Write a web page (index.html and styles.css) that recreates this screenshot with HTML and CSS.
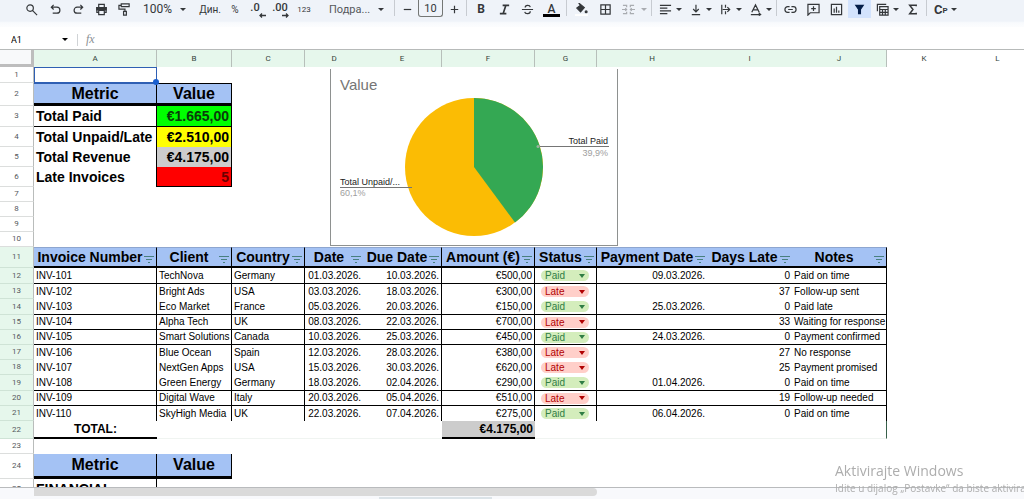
FILE: index.html
```html
<!DOCTYPE html>
<html lang="sr">
<head>
<meta charset="utf-8">
<title>Invoices</title>
<link rel="stylesheet" href="styles.css">
</head>
<body>
<svg class="defs" aria-hidden="true">
  <symbol id="filter" viewBox="0 0 10 8"><path d="M0 1.500h10M2 4.500h6M4 7.500h2" stroke="currentColor" fill="none"/></symbol>
</svg>
<header class="toolbar">
  <button class="tool wide" aria-label="Search"><svg viewBox="0 0 14 14"><circle cx="5.500" cy="5.500" r="3.500"/><path d="M8 8l5 5"/></svg></button>
  <button class="tool" aria-label="Undo"><svg viewBox="0 0 14 14"><path d="M5 2L2.500 4.500 5 7M3 4.500h5.500a3.200 3.200 0 0 1 0 6.500H4"/></svg></button>
  <button class="tool" aria-label="Redo"><svg viewBox="0 0 14 14"><path d="M9 2l2.500 2.500L9 7M11 4.500H5.500a3.200 3.200 0 0 0 0 6.500H10"/></svg></button>
  <button class="tool" aria-label="Print"><svg viewBox="0 0 14 14"><path d="M4 4.500v-3h6v3M4 10H2V5h10v5h-2M4 8h6v4.500H4z"/><path d="M2 5h10v2.500H2z" fill="currentColor"/></svg></button>
  <button class="tool" aria-label="Paint format"><svg viewBox="0 0 14 14"><path d="M3.500 1H12v3H3.500zM3.500 2.500H1V6.500h6.500v2.500M6 9h3v4H6z"/></svg></button>
  <button class="tool zoom">100%<i class="caret"></i></button>
  <button class="tool currency">Дин.</button>
  <button class="tool percent">%</button>
  <button class="tool decimal dec">.0<svg viewBox="0 0 8 5"><path d="M8 2.500H2M4 .5l-2 2 2 2"/></svg></button>
  <button class="tool decimal">.00<svg viewBox="0 0 8 5"><path d="M0 2.500h6M4 .5l2 2-2 2"/></svg></button>
  <button class="tool formats">123</button>
  <button class="tool family">Подра...<i class="caret"></i></button>
  <span class="sep"></span>
  <button class="tool step" aria-label="Decrease font size"><svg viewBox="0 0 14 14"><path d="M3 7h8"/></svg></button>
  <input class="size" value="10" aria-label="Font size">
  <button class="tool step" aria-label="Increase font size"><svg viewBox="0 0 14 14"><path d="M3 7h8M7 3v8"/></svg></button>
  <span class="sep"></span>
  <button class="tool letter">B</button>
  <button class="tool" aria-label="Italic"><svg viewBox="0 0 14 14"><path d="M5 2.500h7M2 11.500h7M8.500 2.500l-3 9" stroke-width="1.800"/></svg></button>
  <button class="tool" aria-label="Strikethrough"><svg viewBox="0 0 14 14"><path d="M1 7h12M10 4.500C9.500 1.800 4.500 1.800 4.500 4.800M4 9.500c.5 2.800 6 2.800 6-.5"/></svg></button>
  <button class="tool letter color"><span>A</span></button>
  <span class="sep"></span>
  <button class="tool fill" aria-label="Fill colour"><svg viewBox="0 0 14 14"><path d="M4 0l6 5-4 4.500L2 5.500l4-3z" fill="currentColor"/><circle cx="12" cy="9.500" r="1" fill="currentColor"/><path d="M0 13h14" stroke="#fff" stroke-width="2"/></svg></button>
  <button class="tool" aria-label="Borders"><svg viewBox="0 0 14 14"><path d="M2 2h10v10H2zM7 2v10M2 7h10"/></svg></button>
  <button class="tool combo pale" aria-label="Merge cells"><svg viewBox="0 0 14 14"><path d="M1 2.500h4v2M13 2.500H9v2M1 11.500h4v-2M13 11.500H9v-2M0 7h5M3.500 5.500L5 7 3.500 8.500M14 7H9M10.500 5.500L9 7l1.500 1.500"/></svg><i class="caret"></i></button>
  <span class="sep"></span>
  <button class="tool combo" aria-label="Horizontal align"><svg viewBox="0 0 14 14"><path d="M1 2.500h12M1 5.500h8M1 8.500h12M1 11.500h8"/></svg><i class="caret"></i></button>
  <button class="tool combo" aria-label="Vertical align"><svg viewBox="0 0 14 14"><path d="M3 12.500h9M7.500 2v7M4.500 6.500l3 3 3-3"/></svg><i class="caret"></i></button>
  <button class="tool combo" aria-label="Wrap"><svg viewBox="0 0 14 14"><path d="M3 2v10M7 2v3M7 9v3M4 7h7M9 4.500L11.500 7 9 9.500"/></svg><i class="caret"></i></button>
  <button class="tool combo" aria-label="Rotate"><svg viewBox="0 0 14 14"><path d="M3 10l4-8 4 8M4.500 7.500h5M2 12.500h10M10.500 10.500l2 2-2 1"/></svg><i class="caret"></i></button>
  <span class="sep"></span>
  <button class="tool" aria-label="Link"><svg viewBox="0 0 14 14"><path d="M6 4H4a3 3 0 0 0 0 6h2M8 4h2a3 3 0 0 1 0 6H8M4.500 7h5"/></svg></button>
  <button class="tool" aria-label="Comment"><svg viewBox="0 0 14 14"><path d="M1 13V1.500h12v9H3.500zM7 3.500v5M4.500 6h5"/></svg></button>
  <button class="tool" aria-label="Chart"><svg viewBox="0 0 14 14"><path d="M1.500 1.500h11v11h-11zM4.500 6v4.500M7 4v6.500M9.500 8v2.500"/></svg></button>
  <button class="tool on" aria-label="Filter"><svg viewBox="0 0 14 14"><path d="M3 2.500h8L8 7v4.500H6V7z" fill="currentColor"/></svg></button>
  <button class="tool combo" aria-label="Table views"><svg viewBox="0 0 14 14"><path d="M1.500 9V1.500H11M4 4h9v9H4zM4 7h9M4 10h9M7 7v6M10 7v6"/></svg><i class="caret"></i></button>
  <button class="tool" aria-label="Functions"><svg viewBox="0 0 14 14"><path d="M11 3.500V2.500H4L7.500 7 4 11.500h7v-1" stroke-width="1.600"/></svg></button>
  <span class="sep"></span>
  <button class="tool combo script">С<small>Р</small><i class="caret"></i></button>
</header>
<div class="formula">
  <label class="namebox"><input value="A1" aria-label="Name box"><i class="caret"></i></label>
  <span class="fx">fx</span>
  <input class="entry" aria-label="Formula">
</div>
<main class="sheet">
<table class="grid">
<colgroup><col class="c-n"><col class="c-a"><col class="c-b"><col class="c-c"><col class="c-d"><col class="c-e"><col class="c-f"><col class="c-g"><col class="c-h"><col class="c-i"><col class="c-j"><col class="c-k"><col class="c-l"></colgroup>
<thead>
<tr class="letters"><th class="corner"></th><th>A</th><th>B</th><th>C</th><th class="open">D</th><th>E</th><th>F</th><th>G</th><th class="open">H</th><th class="open">I</th><th>J</th><th class="plain">K</th><th class="plain">L</th></tr>
</thead>
<tbody>
<tr class="r16"><th>1</th><td class="selected"></td></tr>
<tr class="r23 title first"><th>2</th><td>Metric</td><td>Value</td></tr>
<tr class="r21 metric ruled"><th>3</th><td>Total Paid</td><td class="paid">€1.665,00</td></tr>
<tr class="r20 metric"><th>4</th><td>Total Unpaid/Late</td><td class="unpaid">€2.510,00</td></tr>
<tr class="r20 metric"><th>5</th><td>Total Revenue</td><td class="sum">€4.175,00</td></tr>
<tr class="r20 metric"><th>6</th><td>Late Invoices</td><td class="overdue">5</td></tr>
<tr class="r15"><th>7</th></tr>
<tr class="r15"><th>8</th></tr>
<tr class="r15"><th>9</th></tr>
<tr class="r15"><th>10</th></tr>
<tr class="r21 heads ranged"><th>11</th>
<td><div>Invoice Number<button aria-label="Filter Invoice Number"><svg><use href="#filter"/></svg></button></div></td>
<td><div>Client<button aria-label="Filter Client"><svg><use href="#filter"/></svg></button></div></td>
<td><div>Country<button aria-label="Filter Country"><svg><use href="#filter"/></svg></button></div></td>
<td class="open"><div>Date<button aria-label="Filter Date"><svg><use href="#filter"/></svg></button></div></td>
<td><div>Due Date<button aria-label="Filter Due Date"><svg><use href="#filter"/></svg></button></div></td>
<td><div>Amount (€)<button aria-label="Filter Amount"><svg><use href="#filter"/></svg></button></div></td>
<td><div>Status<button aria-label="Filter Status"><svg><use href="#filter"/></svg></button></div></td>
<td class="open"><div>Payment Date<button aria-label="Filter Payment Date"><svg><use href="#filter"/></svg></button></div></td>
<td class="open"><div>Days Late<button aria-label="Filter Days Late"><svg><use href="#filter"/></svg></button></div></td>
<td><div>Notes<button aria-label="Filter Notes"><svg><use href="#filter"/></svg></button></div></td></tr>
<tr class="r16 data ranged ruled"><th>12</th><td>INV-101</td><td>TechNova</td><td>Germany</td><td>01.03.2026.</td><td>10.03.2026.</td><td>€500,00</td><td><span class="chip"><select aria-label="Status 101"><option>Paid</option></select></span></td><td>09.03.2026.</td><td>0</td><td>Paid on time</td></tr>
<tr class="r15 data ranged"><th>13</th><td>INV-102</td><td>Bright Ads</td><td>USA</td><td>03.03.2026.</td><td>18.03.2026.</td><td>€300,00</td><td><span class="chip late"><select aria-label="Status 102"><option>Late</option></select></span></td><td></td><td>37</td><td>Follow-up sent</td></tr>
<tr class="r16 data ranged ruled"><th>14</th><td>INV-103</td><td>Eco Market</td><td>France</td><td>05.03.2026.</td><td>20.03.2026.</td><td>€150,00</td><td><span class="chip"><select aria-label="Status 103"><option>Paid</option></select></span></td><td>25.03.2026.</td><td>0</td><td>Paid late</td></tr>
<tr class="r15 data ranged ruled"><th>15</th><td>INV-104</td><td>Alpha Tech</td><td>UK</td><td>08.03.2026.</td><td>22.03.2026.</td><td>€700,00</td><td><span class="chip late"><select aria-label="Status 104"><option>Late</option></select></span></td><td></td><td>33</td><td>Waiting for response</td></tr>
<tr class="r15 data ranged ruled"><th>16</th><td>INV-105</td><td>Smart Solutions</td><td>Canada</td><td>10.03.2026.</td><td>25.03.2026.</td><td>€450,00</td><td><span class="chip"><select aria-label="Status 105"><option>Paid</option></select></span></td><td>24.03.2026.</td><td>0</td><td>Payment confirmed</td></tr>
<tr class="r15 data ranged"><th>17</th><td>INV-106</td><td>Blue Ocean</td><td>Spain</td><td>12.03.2026.</td><td>28.03.2026.</td><td>€380,00</td><td><span class="chip late"><select aria-label="Status 106"><option>Late</option></select></span></td><td></td><td>27</td><td>No response</td></tr>
<tr class="r15 data ranged"><th>18</th><td>INV-107</td><td>NextGen Apps</td><td>USA</td><td>15.03.2026.</td><td>30.03.2026.</td><td>€620,00</td><td><span class="chip late"><select aria-label="Status 107"><option>Late</option></select></span></td><td></td><td>25</td><td>Payment promised</td></tr>
<tr class="r16 data ranged ruled"><th>19</th><td>INV-108</td><td>Green Energy</td><td>Germany</td><td>18.03.2026.</td><td>02.04.2026.</td><td>€290,00</td><td><span class="chip"><select aria-label="Status 108"><option>Paid</option></select></span></td><td>01.04.2026.</td><td>0</td><td>Paid on time</td></tr>
<tr class="r15 data ranged ruled"><th>20</th><td>INV-109</td><td>Digital Wave</td><td>Italy</td><td>20.03.2026.</td><td>05.04.2026.</td><td>€510,00</td><td><span class="chip late"><select aria-label="Status 109"><option>Late</option></select></span></td><td></td><td>19</td><td>Follow-up needed</td></tr>
<tr class="r15 data ranged"><th>21</th><td>INV-110</td><td>SkyHigh Media</td><td>UK</td><td>22.03.2026.</td><td>07.04.2026.</td><td>€275,00</td><td><span class="chip"><select aria-label="Status 110"><option>Paid</option></select></span></td><td>06.04.2026.</td><td>0</td><td>Paid on time</td></tr>
<tr class="r18 total ranged"><th>22</th><td class="label">TOTAL:</td><td colspan="4"></td><td class="amount">€4.175,00</td><td colspan="4" class="edge"></td></tr>
<tr class="r15"><th>23</th></tr>
<tr class="r25 title"><th>24</th><td>Metric</td><td>Value</td></tr>
<tr class="r20 metric"><th>25</th><td>FINANCIAL</td></tr>
</tbody>
</table>
<figure class="chart">
<svg viewBox="0 0 286 176">
  <text x="9" y="21" class="chart-title">Value</text>
  <circle cx="143" cy="98" r="69" fill="#fbbc04"/>
  <path d="M143 98V29A69 69 0 0 1 184 153.500z" fill="#34a853"/>
  <path d="M207 77.500h71M9 118.500h72" stroke="#757575" fill="none"/>
  <circle cx="207" cy="77.500" r="1.500" fill="#9ab39f"/>
  <text x="277" y="75" class="end">Total Paid</text>
  <text x="277" y="87" class="end share">39,9%</text>
  <text x="9" y="116">Total Unpaid/...</text>
  <text x="9" y="127" class="share">60,1%</text>
</svg>
</figure>
</main>
<footer class="bottom"><div class="thumb"></div><div class="tab"></div></footer>
<aside class="activate"><strong>Aktivirajte Windows</strong><span>Idite u dijalog „Postavke“ da biste aktivirali Windows.</span></aside>
</body>
</html>
```

FILE: styles.css
```css
* { box-sizing: border-box; }
body { margin: 0; height: 100vh; display: flex; flex-direction: column; overflow: hidden; background: #fff; color: #000; font-family: "Liberation Sans", Arial, sans-serif; font-size: 10px; }
button, input, select { font: inherit; color: inherit; margin: 0; padding: 0; border: 0; background: none; }
.defs { position: absolute; width: 0; height: 0; }

.toolbar { flex: none; height: 27px; display: flex; align-items: flex-start; padding-left: 19px; background: linear-gradient(#eff3f9 78%, #f8fafd 84%, #fcfdfe); color: #34373a; font-family: Roboto, sans-serif; overflow: hidden; }
.tool { flex: none; width: 23px; height: 18px; display: flex; align-items: center; justify-content: center; font-size: 11px; }
.tool svg { flex: none; width: 13px; height: 13px; fill: none; stroke: currentColor; stroke-width: 1.300; }
.wide { width: 25px; }
.caret { flex: none; width: 0; height: 0; border: 3px solid transparent; border-top-color: currentColor; border-bottom: 0; }
.zoom { width: 54px; padding: 0 4px 0 7px; justify-content: space-between; font-size: 12px; }
.currency { width: 38px; font-size: 10px; }
.currency { padding-left: 2px; }
.percent { width: 14px; font-size: 10px; }
.decimal { width: 24px; flex-direction: column; font-weight: 500; font-size: 11px; line-height: 10px; align-items: center; padding-top: 2px; }
.tool.decimal svg { width: 8px; height: 5px; align-self: flex-end; margin-right: 2px; }
.dec { width: 26px; }
.formats { width: 24px; font-size: 8px; }
.family { width: 76px; padding: 0 8px 0 13px; justify-content: space-between; color: #55585c; }
.family .caret { color: #34373a; }
.sep { flex: none; width: 1px; height: 16px; margin: 0 2px; background: #c7cbd1; }
.step { width: 20px; }
.size { flex: none; width: 25px; height: 17px; margin: 0 1px; text-align: center; font-size: 11px; border: 1px solid #747775; border-top: 0; border-radius: 0 0 3px 3px; }
.letter { width: 24px; font-weight: 700; font-size: 12px; }
.color { width: 25px; font-weight: 500; }
.color span { width: 17px; height: 16px; line-height: 16px; border-bottom: 3px solid #000; margin-bottom: 1px; }
.fill { width: 25px; }
.combo { width: 30px; padding: 0 2px 0 5px; justify-content: space-between; }
.combo .caret { border-width: 3px; border-bottom: 0; }
.pale { width: 32px; color: #a9acb1; }
.on { background: #d3e3fd; color: #041e49; }
.script { font-weight: 700; font-size: 13px; }
.script small { font-size: 8px; padding-top: 3px; margin-right: auto; }

.formula { flex: none; height: 22px; display: flex; align-items: center; padding-top: 3px; font-family: Roboto, sans-serif; }
.namebox { width: 78px; height: 12px; display: flex; align-items: center; padding: 0 9px 0 11px; border-right: 1px solid #d0d3d6; }
.namebox input { flex: 1; min-width: 0; font-size: 9px; }
.fx { width: 26px; padding-left: 8px; font: italic 12px "Liberation Serif", serif; color: #8b8f93; }
.entry { flex: 1; }

.sheet { position: relative; flex: 1; min-height: 0; overflow: hidden; border-top: 1px solid #b7bab9; }
.grid { table-layout: fixed; width: 1034px; border-collapse: separate; border-spacing: 0; }
.c-n { width: 34px; } .c-a { width: 123px; } .c-b { width: 75px; } .c-c { width: 73px; } .c-d { width: 58px; }
.c-e { width: 79px; } .c-f { width: 93px; } .c-g { width: 62px; } .c-h { width: 110px; } .c-i { width: 85px; }
.c-j { width: 95px; } .c-k { width: 74px; } .c-l { width: 73px; }
.grid th, .grid td { padding: 0 2px; line-height: 12px; white-space: nowrap; overflow: hidden; }
.grid th { font: 8px/10px Roboto, sans-serif; color: #55595c; text-align: center; }
.grid tbody th { border-right: 1px solid #b9bcbb; border-bottom: 1px solid #dcdedd; }
.letters { height: 17px; }
.grid .letters th { background: #e6f7ec; border-right: 1px solid #b7bfba; color: #34443a; }
.grid .letters .open { border-right: 0; }
.grid .letters .plain { background: #fff; border: 0; }
.grid .letters .corner { background: #f8f9fa; border-right: 3px solid #bdbdbd; border-bottom: 3px solid #bdbdbd; }
.r15 { height: 15px; } .r16 { height: 16px; } .r18 { height: 18px; } .r20 { height: 20px; } .r21 { height: 21px; } .r23 { height: 23px; } .r25 { height: 25px; }
.grid .ranged th { background: #e6f7ec; border-bottom-color: #cfe3d6; }
.grid .selected { position: relative; overflow: visible; border: 1px solid #2f5fb3; }
.selected::after { content: ""; position: absolute; right: -3px; bottom: -3px; width: 6px; height: 6px; border-radius: 50%; background: #1a5fd0; z-index: 1; }

.title td { background: #a4c2f4; border-right: 1px solid #000; border-bottom: 3px solid #000; text-align: center; font-weight: 700; font-size: 16px; }
.first td { border-top: 1px solid #000; }
.first td:nth-child(2) { border-top-color: #2f5fb3; }
.metric td { font-size: 14px; font-weight: 700; border-right: 1px solid #000; }
.metric td + td { text-align: right; }
.ruled td { border-bottom: 1px solid #000; }
.paid { background: #0f0; color: #0a3b0a; }
.unpaid { background: #ff0; }
.sum { background: #ccc; }
.overdue { background: #f00; color: #6b0000; border-bottom: 1px solid #000; }

.heads td { background: #a4c2f4; font-size: 14px; font-weight: 700; border-top: 1px solid #8ea6d0; border-right: 1px solid #000; border-bottom: 2px solid #000; }
.heads td.open { border-right: 0; }
.heads div { display: flex; align-items: center; justify-content: center; gap: 1px; }
.heads button { flex: none; margin-left: auto; width: 10px; height: 12px; padding-top: 4px; color: #48807f; }
.heads div::before { content: ""; margin-right: auto; }
.heads svg { display: block; width: 10px; height: 8px; }

.data td { border-right: 1px solid #000; }
.data td:nth-child(5), .data td:nth-child(9), .data td:nth-child(10) { border-right: 0; }
.data td:nth-child(5), .data td:nth-child(6), .data td:nth-child(7), .data td:nth-child(9), .data td:nth-child(10) { text-align: right; }
.chip { display: flex; align-items: center; width: 48px; height: 11px; margin-left: 4px; padding: 0 4px; border-radius: 6px; background: #d4edbc; color: #2f7d44; }
.chip::after { content: ""; border: 3px solid transparent; border-top: 4px solid currentColor; border-bottom: 0; }
.chip select { flex: 1; min-width: 0; height: 11px; line-height: 11px; appearance: none; }
.late { background: #ffcfc9; color: #b10202; }

.total td { font-size: 12px; font-weight: 700; border-bottom: 1px solid #f0f4f1; }
.total .label { text-align: center; border-bottom: 2px solid #000; }
.total .amount { text-align: right; background: #ccc; border-bottom: 2px solid #000; }
.total .edge { border-right: 1px solid #38604a; }

.chart { position: absolute; left: 330px; top: 19px; width: 288px; margin: 0; background: #fff; border: 1px solid #8e9190; border-top: 0; }
.chart svg { display: block; width: 100%; font-size: 9px; fill: #222; }
.chart .chart-title { font-size: 15px; fill: #757575; }
.chart .end { text-anchor: end; }
.chart .share { fill: #9e9e9e; }

.bottom { flex: none; height: 12px; display: flex; flex-direction: column; justify-content: space-between; border-top: 1px solid #b9bbbd; background: #f8f9fc; }
.thumb { width: 55%; height: 8px; margin-left: 34px; background: #dadada; border-radius: 0 4px 4px 0; }
.tab { width: 11%; height: 2px; margin-left: 37%; background: #dbe3e8; }

.activate { position: fixed; left: 835px; top: 461px; display: flex; flex-direction: column; color: #adadad; font-family: "Open Sans", sans-serif; white-space: nowrap; }
.activate strong { font-weight: 400; font-size: 14px; line-height: 20px; }
.activate span { font-size: 10px; line-height: 15px; }
```
